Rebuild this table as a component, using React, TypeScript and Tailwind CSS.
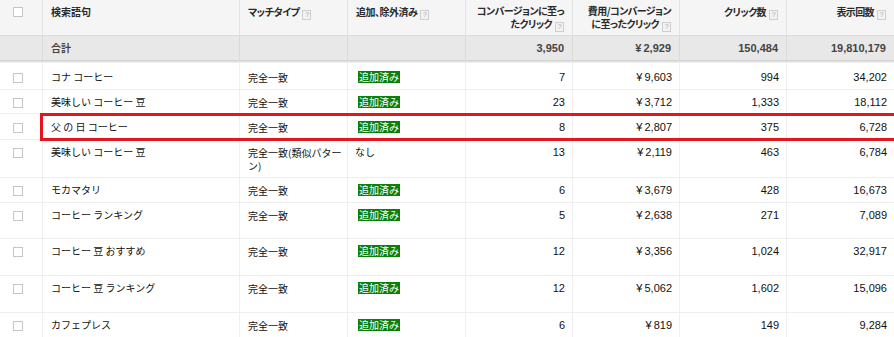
const GRID = "grid grid-cols-[43px_197px_108px_118px_107px_107px_107px_107px]";
const JP = "font-['Noto_Sans_CJK_JP',sans-serif]";
const NUM = "font-['Liberation_Sans','Noto_Sans_CJK_JP',sans-serif]";

type Row = {
  term: string;
  match: React.ReactNode;
  added: boolean;
  conv: string;
  cost: string;
  clicks: string;
  imps: string;
  h: string;
  pt: string;
};

const rows: Row[] = [
  { term: "コナ コーヒー", match: "完全一致", added: true, conv: "7", cost: "9,603", clicks: "994", imps: "34,202", h: "h-[27px]", pt: "pt-[8px]" },
  { term: "美味しい コーヒー 豆", match: "完全一致", added: true, conv: "23", cost: "3,712", clicks: "1,333", imps: "18,112", h: "h-[24px]", pt: "pt-[6px]" },
  { term: "父 の 日 コーヒー", match: "完全一致", added: true, conv: "8", cost: "2,807", clicks: "375", imps: "6,728", h: "h-[26px]", pt: "pt-[7px]" },
  {
    term: "美味しい コーヒー 豆",
    match: (
      <>
        完全一致(類似パター
        <br />
        ン)
      </>
    ),
    added: false,
    conv: "13",
    cost: "2,119",
    clicks: "463",
    imps: "6,784",
    h: "h-[38px]",
    pt: "pt-[6px]",
  },
  { term: "モカマタリ", match: "完全一致", added: true, conv: "6", cost: "3,679", clicks: "428", imps: "16,673", h: "h-[25px]", pt: "pt-[6px]" },
  { term: "コーヒー ランキング", match: "完全一致", added: true, conv: "5", cost: "2,638", clicks: "271", imps: "7,089", h: "h-[36px]", pt: "pt-[6px]" },
  { term: "コーヒー 豆 おすすめ", match: "完全一致", added: true, conv: "12", cost: "3,356", clicks: "1,024", imps: "32,917", h: "h-[37px]", pt: "pt-[6px]" },
  { term: "コーヒー 豆 ランキング", match: "完全一致", added: true, conv: "12", cost: "5,062", clicks: "1,602", imps: "15,096", h: "h-[37px]", pt: "pt-[6px]" },
  { term: "カフェプレス", match: "完全一致", added: true, conv: "6", cost: "819", clicks: "149", imps: "9,284", h: "h-[30px]", pt: "pt-[6px]" },
];

const Help = () => (
  <span className={`ml-[3px] inline-block h-[10px] w-[9px] border border-[#cfcfcf] bg-[#f2f2f2] text-center align-[-1px] text-[7px] leading-[8px] font-normal text-[#aaa] ${NUM}`}>
    ?
  </span>
);

const Box = ({ mt }: { mt: string }) => (
  <div className={`${mt} ml-[13px] h-[10px] w-[10px] border border-[#c6c6c6] bg-white`} />
);

const Yen = ({ v }: { v: string }) => (
  <>
    <span className="mr-[2px]">¥</span>
    {v}
  </>
);

const App = () => {
  const headCell = "border-r border-[#e2e2e2] px-[8px] pt-[6px] text-[10px] leading-[12px] font-bold text-[#2a2a2a] [font-feature-settings:'palt']";
  const headTwo = "border-r border-[#e2e2e2] px-[8px] pt-[4px] text-[10px] leading-[13px] font-bold text-[#2a2a2a] [font-feature-settings:'palt'] whitespace-nowrap text-right tracking-[-0.6px]";
  const totalCell = "border-r border-[#dadada] px-[8px] pt-[6px] leading-[12px] font-bold text-[#444]";
  const cell = "border-r border-[#efefef] leading-[12px] text-[#111]";

  return (
    <div className={`relative h-[337px] w-[894px] overflow-hidden bg-white ${JP}`}>
      {/* header */}
      <div className={`${GRID} h-[36px] border-b border-[#dcdcdc] bg-[#f5f5f5]`}>
        <div className="border-r border-[#e2e2e2]">
          <Box mt="mt-[7px]" />
        </div>
        <div className={headCell}>検索語句</div>
        <div className={`${headCell} tracking-[-0.5px]`}>
          マッチタイプ<Help />
        </div>
        <div className={`${headCell} tracking-[-0.5px]`}>
          追加、除外済み<Help />
        </div>
        <div className={headTwo}>
          コンバージョンに至っ
          <br />
          たクリック<Help />
        </div>
        <div className={headTwo}>
          費用/コンバージョン
          <br />
          に至ったクリック<Help />
        </div>
        <div className={`${headCell} text-right tracking-[-0.6px]`}>
          クリック数<Help />
        </div>
        <div className={`${headCell} border-r-0 text-right tracking-[-0.6px]`}>
          表示回数<Help />
        </div>
      </div>

      {/* total */}
      <div className={`${GRID} h-[24px] bg-[#e8e8e8]`}>
        <div className="border-r border-[#dadada]" />
        <div className={`${totalCell} text-[10px]`}>合計</div>
        <div className={totalCell} />
        <div className={totalCell} />
        <div className={`${totalCell} text-right text-[11px] ${NUM}`}>3,950</div>
        <div className={`${totalCell} text-right text-[11px] ${NUM}`}>
          <Yen v="2,929" />
        </div>
        <div className={`${totalCell} text-right text-[11px] ${NUM}`}>150,484</div>
        <div className={`${totalCell} border-r-0 text-right text-[11px] ${NUM}`}>19,810,179</div>
      </div>
      <div className="h-[3px] bg-linear-to-b from-[#cdcdcd] to-[#f6f6f6]" />

      {/* rows */}
      {rows.map((r, i) => (
        <div key={i} className={`${GRID} ${r.h} border-b border-[#efefef]`}>
          <div className="border-r border-[#efefef]">
            <Box mt={r.pt === "pt-[8px]" ? "mt-[10px]" : r.pt === "pt-[7px]" ? "mt-[9px]" : "mt-[8px]"} />
          </div>
          <div className={`${cell} ${r.pt} whitespace-pre px-[8px] text-[10px]`}>{r.term}</div>
          <div className={`${cell} ${r.pt} whitespace-nowrap px-[8px] text-[10px] leading-[13px]`}>{r.match}</div>
          <div className={`${cell} ${r.pt} pl-[7px] text-[10px]`}>
            {r.added ? (
              <span className="ml-[3px] inline-block bg-[#0a800a] px-[1px] leading-[12px] text-white">追加済み</span>
            ) : (
              "なし"
            )}
          </div>
          <div className={`${cell} ${r.pt} pr-[7px] text-right text-[11px] ${NUM}`}>{r.conv}</div>
          <div className={`${cell} ${r.pt} pr-[7px] text-right text-[11px] ${NUM}`}>
            <Yen v={r.cost} />
          </div>
          <div className={`${cell} ${r.pt} pr-[7px] text-right text-[11px] ${NUM}`}>{r.clicks}</div>
          <div className={`${cell} ${r.pt} border-r-0 pr-[7px] text-right text-[11px] ${NUM}`}>{r.imps}</div>
        </div>
      ))}

      {/* highlight */}
      <div className="absolute top-[113px] left-[40px] h-[28px] w-[860px] border-[3px] border-[#e3151d]" />
    </div>
  );
};

export default App;
